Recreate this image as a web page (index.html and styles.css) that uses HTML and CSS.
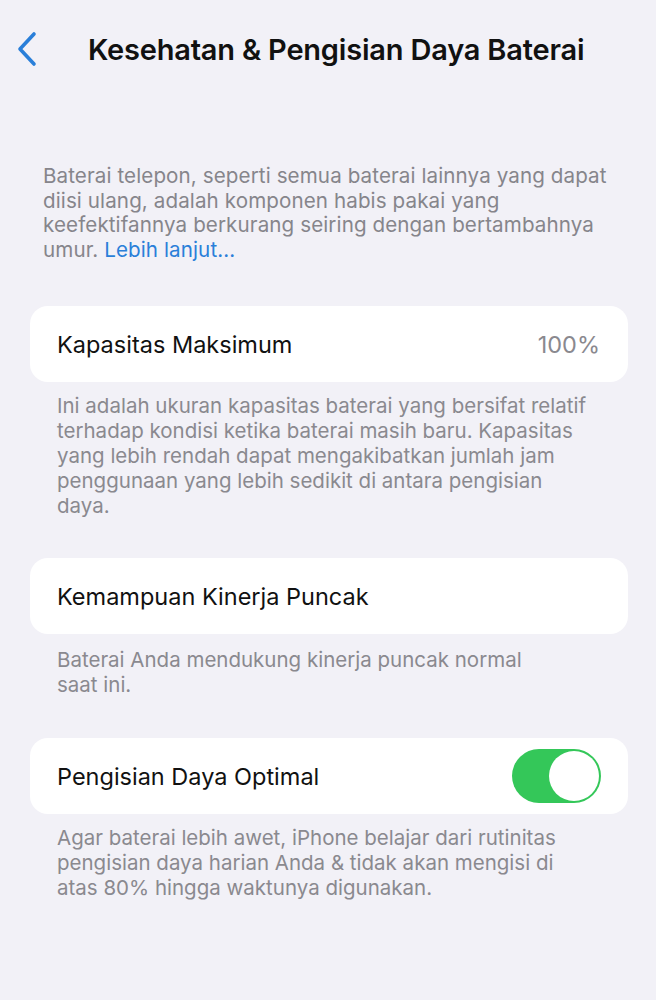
FILE: index.html
```html
<!DOCTYPE html>
<html lang="id">
<head>
<meta charset="utf-8">
<link rel="stylesheet" href="styles.css">
</head>
<body>
<div class="screen">
  <header class="nav">
    <svg class="back" width="22" height="36" viewBox="0 0 22 36"><path d="M18 3 L4 18 L18 33" fill="none" stroke="#2a7fd9" stroke-width="3.6" stroke-linecap="round" stroke-linejoin="round"/></svg>
    <h1 class="title">Kesehatan &amp; Pengisian Daya Baterai</h1>
  </header>

  <p class="intro">Baterai telepon, seperti semua baterai lainnya yang dapat<br>diisi ulang, adalah komponen habis pakai yang<br>keefektifannya berkurang seiring dengan bertambahnya<br>umur. <span class="link">Lebih lanjut...</span></p>

  <section class="group g1">
    <div class="card">
      <span class="label">Kapasitas Maksimum</span>
      <span class="value">100%</span>
    </div>
    <p class="note">Ini adalah ukuran kapasitas baterai yang bersifat relatif<br>terhadap kondisi ketika baterai masih baru. Kapasitas<br>yang lebih rendah dapat mengakibatkan jumlah jam<br>penggunaan yang lebih sedikit di antara pengisian<br>daya.</p>
  </section>

  <section class="group g2">
    <div class="card">
      <span class="label">Kemampuan Kinerja Puncak</span>
    </div>
    <p class="note n2">Baterai Anda mendukung kinerja puncak normal<br>saat ini.</p>
  </section>

  <section class="group g3">
    <div class="card">
      <span class="label">Pengisian Daya Optimal</span>
      <span class="toggle"><span class="knob"></span></span>
    </div>
    <p class="note">Agar baterai lebih awet, iPhone belajar dari rutinitas<br>pengisian daya harian Anda &amp; tidak akan mengisi di<br>atas 80% hingga waktunya digunakan.</p>
  </section>
</div>
</body>
</html>
```

FILE: styles.css
```css
html, body {
  margin: 0;
  padding: 0;
  background: #f2f1f7;
}
.screen {
  width: 656px;
  height: 1000px;
  font-family: Inter, "Noto Sans", sans-serif;
  color: #111;
  overflow: hidden;
}
.nav {
  display: flex;
  align-items: center;
  height: 98px;
  padding-left: 16px;
}
.back {
  display: block;
}
.title {
  margin: 0 0 0 50px;
  font-size: 29px;
  font-weight: 600;
  letter-spacing: -0.2px;
  white-space: nowrap;
  color: #111;
}
.intro {
  margin: 66px 0 0 43px;
  font-size: 20.6px;
  line-height: 24.6px;
  letter-spacing: 0.1px;
  white-space: nowrap;
  color: #86858b;
}
.link {
  color: #2a7fd9;
}
.group {
  margin: 0 28px 0 30px;
}
.g1 { margin-top: 44px; }
.g2 { margin-top: 40px; }
.g3 { margin-top: 41px; }
.card {
  background: #fff;
  border-radius: 18px;
  height: 76px;
  display: flex;
  align-items: center;
  justify-content: space-between;
  padding: 0 28px 0 27px;
}
.label {
  font-size: 23.5px;
  color: #111;
}
.value {
  font-size: 23.5px;
  color: #8a898f;
}
.note {
  margin: 11px 0 0 27px;
  font-size: 20.5px;
  line-height: 25px;
  white-space: nowrap;
  color: #8a898f;
}
.note.n2 {
  margin-top: 13px;
}
.toggle {
  position: relative;
  width: 89px;
  height: 54px;
  border-radius: 27px;
  background: #34c759;
  margin-right: -1px;
}
.knob {
  position: absolute;
  right: 2px;
  top: 2px;
  width: 50px;
  height: 50px;
  border-radius: 50%;
  background: #fff;
}
```
